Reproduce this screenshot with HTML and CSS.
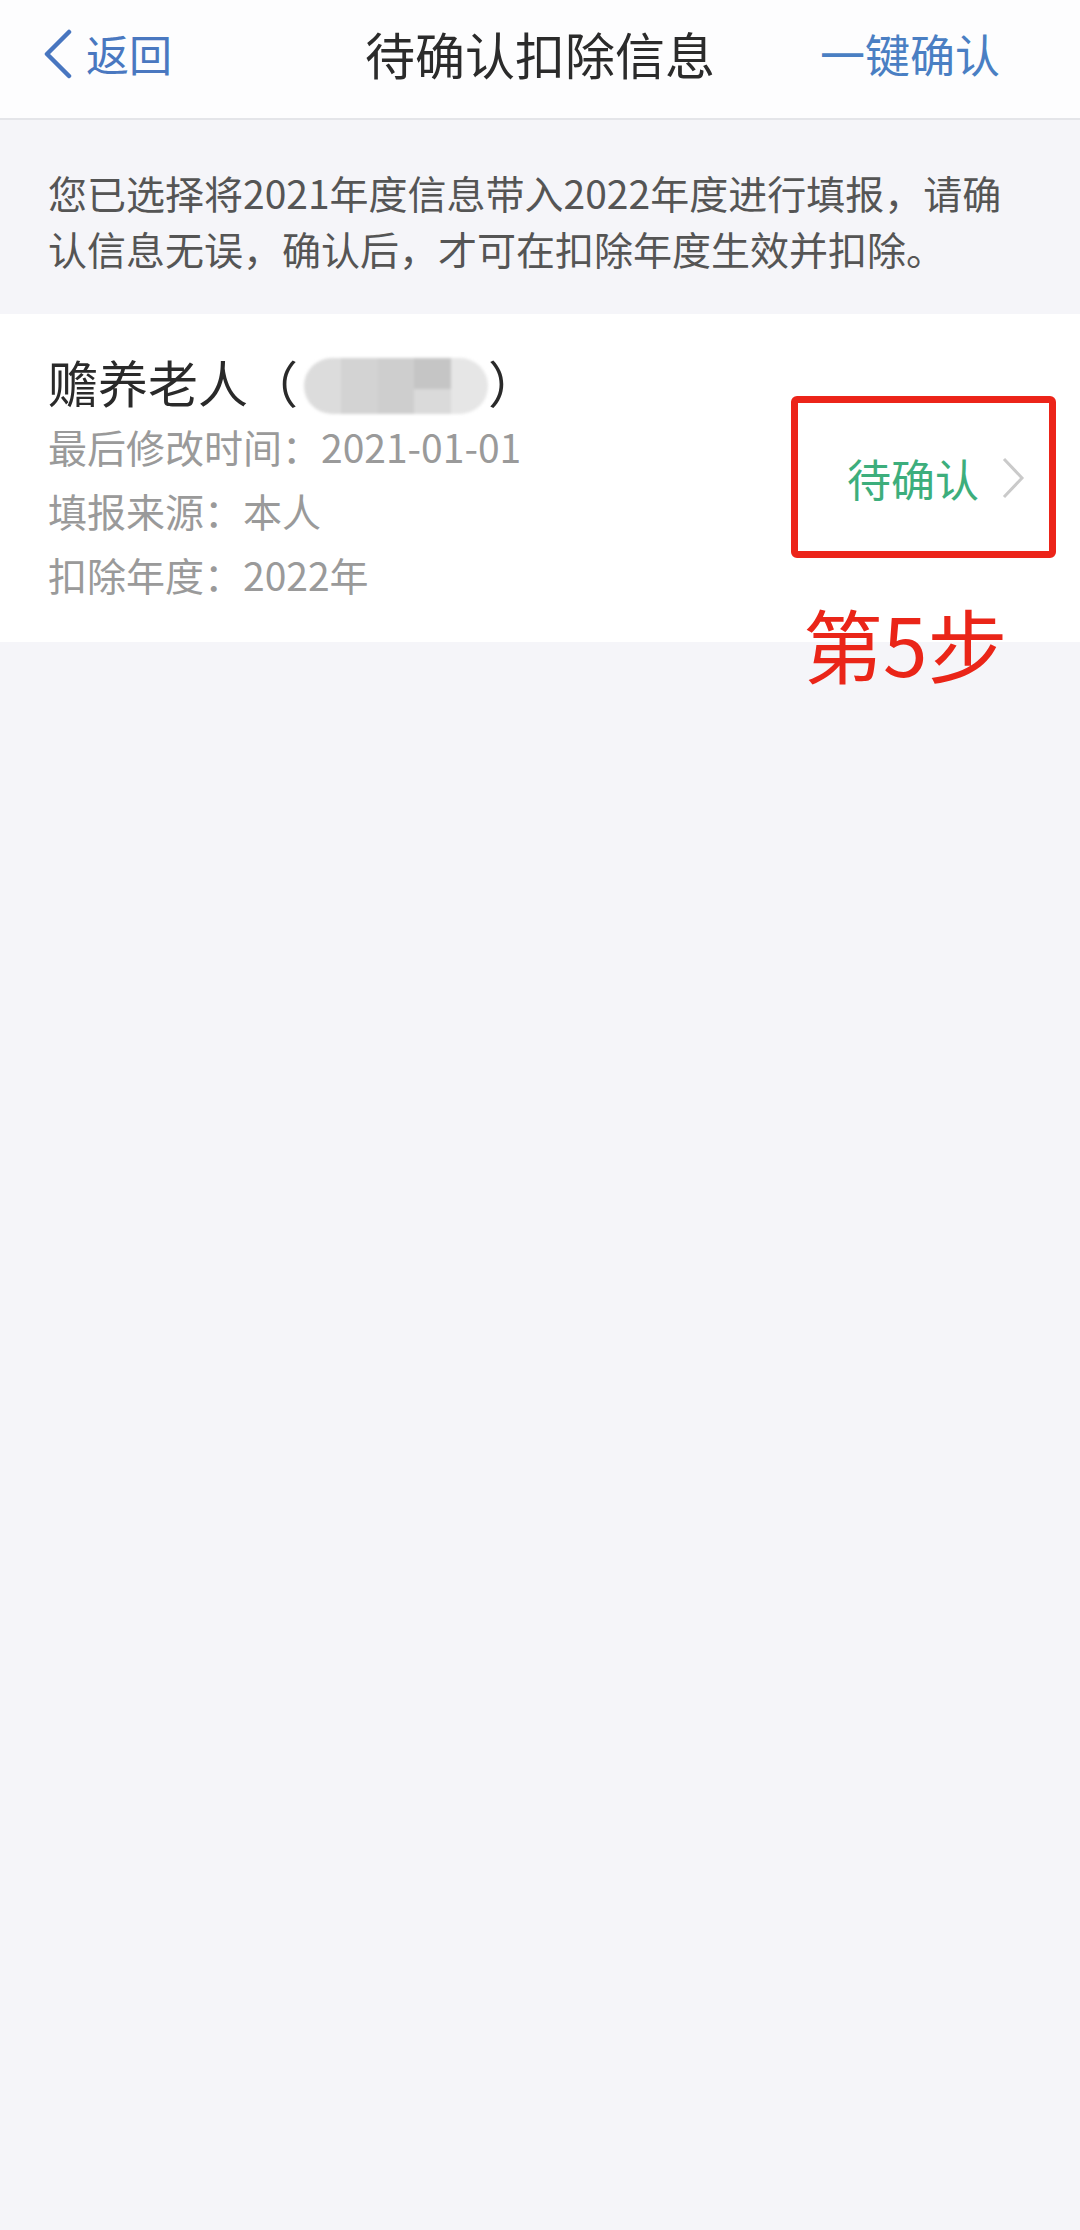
FILE: index.html
```html
<!DOCTYPE html>
<html>
  <head>
    <meta charset="utf-8">
    <title>待确认扣除信息</title>
    <link rel="stylesheet" href="styles.css">
  </head>
  <body>
    <div class="header">
      <div class="back">
        <svg class="back-icon" width="30" height="50" viewBox="0 0 30 50">
          <polyline points="25,3 3,25 25,47" fill="none" stroke="#4876c0" stroke-width="4.5" stroke-linecap="round" stroke-linejoin="round"/>
        </svg>
        <span>返回</span>
      </div>
      <div class="title">待确认扣除信息</div>
      <div class="action">一键确认</div>
    </div>

    <div class="notice">
      您已选择将2021年度信息带入2022年度进行填报，请确认信息无误，确认后，才可在扣除年度生效并扣除。
    </div>

    <div class="card">
      <div class="info">
        <div class="name">赡养老人（<span class="blur"><i class="b1"></i><i class="b2"></i><i class="b3"></i><i class="b4"></i><i class="b5"></i></span>）</div>
        <div class="meta">最后修改时间：2021-01-01</div>
        <div class="meta">填报来源：本人</div>
        <div class="meta">扣除年度：2022年</div>
      </div>
      <div class="status">
        <span>待确认</span>
        <svg class="arrow" width="24" height="42" viewBox="0 0 24 42">
          <polyline points="3,2 21,21 3,40" fill="none" stroke="#cacaca" stroke-width="3"/>
        </svg>
        <div class="mark"></div>
        <div class="step">第5步</div>
      </div>
    </div>
  </body>
</html>
```

FILE: styles.css
```css
body {
  margin: 0;
  min-height: 2230px;
  background-color: #f5f5f9;
  font-family: "Noto Sans CJK SC", "Noto Sans", sans-serif;
}
.header {
  height: 106px;
  display: flex;
  align-items: center;
  justify-content: space-between;
  padding: 0 80px 12px 44px;
  background-color: #fdfdfe;
  border-bottom: 2px solid #e4e5e9;
  position: relative;
}
.back {
  display: flex;
  align-items: center;
  gap: 12px;
  color: #4a78c0;
  font-size: 43px;
}
.back-icon {
  margin-top: 2px;
}
.title {
  position: absolute;
  left: 0;
  right: 0;
  text-align: center;
  font-size: 50px;
  color: #2b2b2b;
  pointer-events: none;
}
.action {
  color: #4a7fc3;
  font-size: 45px;
}
.notice {
  padding: 44px 70px 38px 48px;
  font-size: 39px;
  line-height: 56px;
  color: #555;
}
.card {
  display: flex;
  align-items: center;
  justify-content: space-between;
  background-color: #fff;
  padding: 35px 55px 36px 48px;
}
.name {
  font-size: 50px;
  line-height: 64px;
  color: #2a2a2a;
}
.blur {
  display: inline-flex;
  vertical-align: middle;
  width: 184px;
  height: 56px;
  margin: -6px 0 0 6px;
  border-radius: 28px;
  overflow: hidden;
  filter: blur(1.5px);
}
.blur i {
  flex: 1;
}
.b1 { background-color: #dcdcdc; }
.b2 { background-color: #d3d3d3; }
.b3 { background-color: #cecece; }
.b4 { background: linear-gradient(#c5c5c5 55%, #dadada 55%); }
.b5 { background-color: #e6e6e6; }
.meta {
  font-size: 39px;
  line-height: 64px;
  color: #9a9a9a;
}
.status {
  position: relative;
  display: flex;
  align-items: center;
  gap: 22px;
  font-size: 44px;
  line-height: 64px;
  color: #3dae7c;
}
.mark {
  position: absolute;
  left: -56px;
  right: -31px;
  top: -50px;
  height: 148px;
  border: 7px solid #ec2419;
  border-radius: 6px;
}
.step {
  position: absolute;
  left: -44px;
  top: 156px;
  font-size: 80px;
  line-height: 1;
  color: #ea2518;
  white-space: nowrap;
}
```
